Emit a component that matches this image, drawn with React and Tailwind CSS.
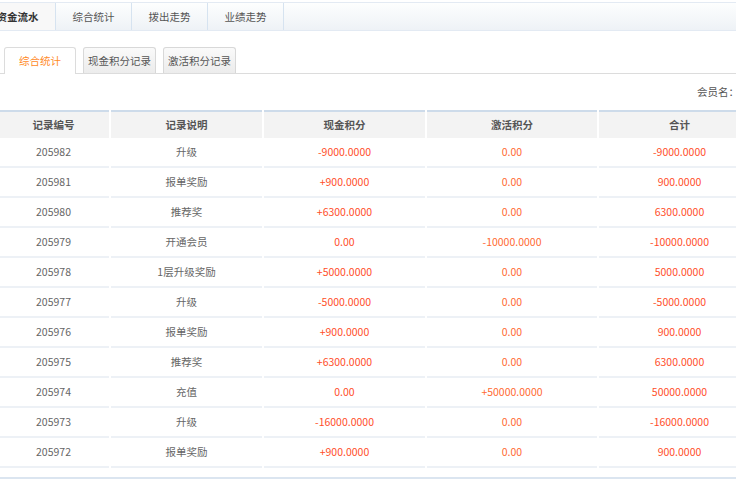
import React from "react";

const ROWS = [
  ["205982", "升级", "-9000.0000", "0.00", "-9000.0000"],
  ["205981", "报单奖励", "+900.0000", "0.00", "900.0000"],
  ["205980", "推荐奖", "+6300.0000", "0.00", "6300.0000"],
  ["205979", "开通会员", "0.00", "-10000.0000", "-10000.0000"],
  ["205978", "1层升级奖励", "+5000.0000", "0.00", "5000.0000"],
  ["205977", "升级", "-5000.0000", "0.00", "-5000.0000"],
  ["205976", "报单奖励", "+900.0000", "0.00", "900.0000"],
  ["205975", "推荐奖", "+6300.0000", "0.00", "6300.0000"],
  ["205974", "充值", "0.00", "+50000.0000", "50000.0000"],
  ["205973", "升级", "-16000.0000", "0.00", "-16000.0000"],
  ["205972", "报单奖励", "+900.0000", "0.00", "900.0000"],
];

const HEADERS = ["记录编号", "记录说明", "现金积分", "激活积分", "合计"];

const TOP_TABS = ["综合统计", "拨出走势", "业绩走势"];

export default function App() {
  return (
    <div
      className="w-[736px] h-[479px] overflow-hidden bg-white text-[10.5px] text-[#555] whitespace-nowrap"
      style={{ fontFamily: '"Microsoft YaHei", "Noto Sans CJK SC", "Noto Sans", sans-serif' }}
    >
      {/* top tab bar */}
      <div className="mt-[2px] h-[29px] border-t border-b border-[#e3eaf3] bg-gradient-to-b from-[#fdfefe] to-[#eef2f6] flex -ml-[20px] w-[780px]">
        <div className="w-[76px] h-full flex items-center justify-center bg-[#f8f8f8] font-bold text-[#333] border-r border-[#d6e3f0]">
          资金流水
        </div>
        {TOP_TABS.map((t) => (
          <div
            key={t}
            className="w-[76px] h-full flex items-center justify-center text-[#555] border-r border-[#d6e3f0]"
          >
            {t}
          </div>
        ))}
      </div>

      {/* sub tabs */}
      <div className="mt-[16px] h-[27px] flex items-end gap-[7px] pl-[4px] border-b border-[#dcdcdc]">
        <div className="w-[72px] h-[27px] -mb-px flex items-center justify-center bg-white text-[#ff8a1f] border border-b-0 border-[#dcdcdc] rounded-t-[3px]">
          综合统计
        </div>
        <div className="w-[73px] h-[26px] flex items-center justify-center bg-gradient-to-b from-[#fafafa] to-[#ececec] text-[#555] border border-b-0 border-[#d8d8d8] rounded-t-[3px]">
          现金积分记录
        </div>
        <div className="w-[73px] h-[26px] flex items-center justify-center bg-gradient-to-b from-[#fafafa] to-[#ececec] text-[#555] border border-b-0 border-[#d8d8d8] rounded-t-[3px]">
          激活积分记录
        </div>
      </div>

      {/* member name */}
      <div className="h-[36px] flex items-center justify-end -mr-[3px] text-[#555]">
        会员名：
      </div>

      {/* table */}
      <div className="-ml-[2px] w-[770px] grid grid-cols-[111px_151px_161px_170px_161px] gap-x-[2px]">
        {HEADERS.map((h) => (
          <div
            key={h}
            className="h-[28px] flex items-center justify-center bg-[#f3f3f3] border-t-2 border-[#cddbea] font-bold text-[#555]"
          >
            {h}
          </div>
        ))}
        {ROWS.map((r) =>
          r.map((c, i) => (
            <div
              key={r[0] + i}
              className={
                "h-[30px] flex items-center justify-center border-b-2 border-[#edf1f6] " +
                (i < 2 ? "text-[#666]" : i === 3 ? "text-[#ff6a33]" : "text-[#ff4e2a]")
              }
            >
              {c}
            </div>
          ))
        )}
      </div>

      <div className="mt-[9px] h-[6px] bg-[#dbe5f0]" />
    </div>
  );
}
